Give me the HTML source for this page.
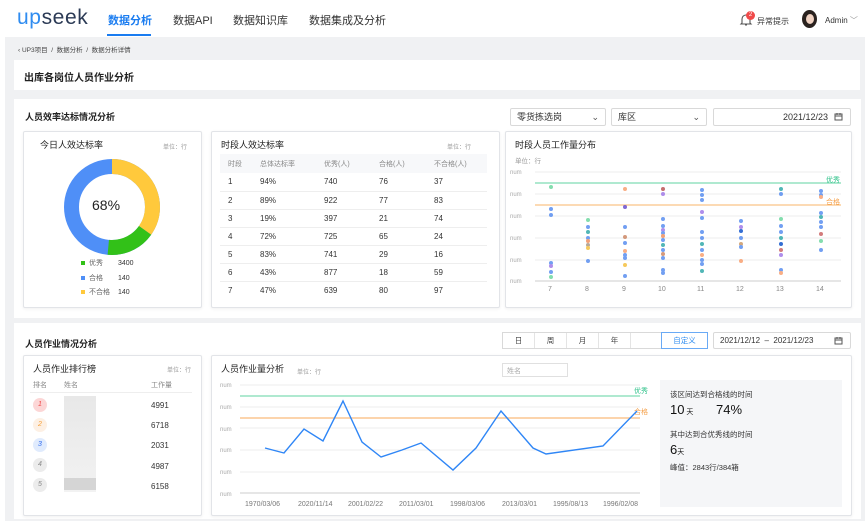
<!DOCTYPE html>
<html><head><meta charset="utf-8"><style>
*{margin:0;padding:0;box-sizing:border-box}
body{width:865px;height:524px;overflow:hidden;background:#fff;font-family:"Liberation Sans","Noto Sans CJK SC",sans-serif;color:#333;position:relative}
.a{position:absolute}
.card{position:absolute;background:#fff;border:1px solid #e2e4e8;border-radius:2px;box-shadow:0 1px 3px rgba(0,0,0,.06)}
.sel{position:absolute;border:1px solid #d9d9d9;border-radius:2px;background:#fff;font-size:9px;color:#333;padding:0 6px;height:18px;line-height:16px}
.s{font-size:6px;color:#999;position:absolute}
table{border-collapse:collapse;font-size:8px;color:#333}
</style></head><body>
<div class="a" style="left:17px;top:6px;font-size:21px;color:#2f8cf0;letter-spacing:0.6px;font-family:'Liberation Sans',sans-serif">up<span style="color:#2b3a55">seek</span></div>
<div class="a" style="left:108px;top:12px;font-size:11px;color:#1a7cf0;font-weight:bold">数据分析</div>
<div class="a" style="left:107px;top:34px;width:44px;height:2px;background:#1a7cf0"></div>
<div class="a" style="left:173px;top:12px;font-size:11px;color:#333">数据API</div>
<div class="a" style="left:233px;top:12px;font-size:11px;color:#333">数据知识库</div>
<div class="a" style="left:309px;top:12px;font-size:11px;color:#333">数据集成及分析</div>
<svg class="a" style="left:739px;top:13px" width="14" height="14" viewBox="0 0 14 14"><path d="M3 10V6a4 4 0 0 1 8 0v4l1 1H2z M6 12h2" fill="none" stroke="#555" stroke-width="1.1"/></svg>
<div class="a" style="left:746px;top:11px;width:9px;height:9px;border-radius:50%;background:#f04a4a;color:#fff;font-size:6px;text-align:center;line-height:9px">2</div>
<div class="a" style="left:757px;top:16px;font-size:8px;color:#333">异常提示</div>
<div class="a" style="left:802px;top:10px;width:15px;height:18px;border-radius:50%;background:#2a221f"><div style="margin:4px auto 0;width:8px;height:10px;border-radius:50%;background:#f1d3c3"></div></div>
<div class="a" style="left:825px;top:15px;font-size:8px;color:#333">Admin <span style="color:#999">﹀</span></div>
<div class="a" style="left:5px;top:37px;width:860px;height:484px;background:#f0f1f3"></div>
<div class="a" style="left:18px;top:44px;font-size:6.5px;color:#444">‹ UP3项目 &nbsp;/&nbsp; 数据分析 &nbsp;/&nbsp; 数据分析详情</div>
<div class="a" style="left:14px;top:60px;width:846px;height:30px;background:#fff"></div>
<div class="a" style="left:24px;top:69px;font-size:10px;font-weight:bold;color:#222">出库各岗位人员作业分析</div>
<div class="a" style="left:14px;top:99px;width:847px;height:219px;background:#fff"></div>
<div class="a" style="left:25px;top:110px;font-size:9px;font-weight:bold;color:#222">人员效率达标情况分析</div>
<div class="sel" style="left:510px;top:108px;width:96px">零货拣选岗<span style="float:right;color:#555">⌄</span></div>
<div class="sel" style="left:611px;top:108px;width:96px">库区<span style="float:right;color:#555">⌄</span></div>
<div class="sel" style="left:713px;top:108px;width:138px;text-align:right;padding-right:22px">2021/12/23</div>
<svg class="a" style="left:834px;top:112px" width="9" height="9"><rect x="1" y="2" width="7" height="6" fill="none" stroke="#555"/><path d="M1 4h7M3 1v2M6 1v2" stroke="#555"/></svg>
<div class="card" style="left:23px;top:131px;width:179px;height:177px"></div>
<div class="a" style="left:40px;top:138px;font-size:9px;color:#222">今日人效达标率</div>
<div class="s" style="left:163px;top:142px">单位：行</div>
<svg class="a" style="left:64px;top:159px" width="96" height="96" viewBox="0 0 96 96">
<g transform="rotate(-90 48 48)" fill="none" stroke-width="15">
<circle cx="48" cy="48" r="40.5" stroke="#4f8ff7"/>
<circle cx="48" cy="48" r="40.5" stroke="#ffc93c" stroke-dasharray="88.4 300"/>
<circle cx="48" cy="48" r="40.5" stroke="#32c118" stroke-dasharray="0 88.4 42.4 300"/>
</g></svg>
<div class="a" style="left:92px;top:197px;font-size:14px;color:#222">68%</div>
<div class="a" style="left:81px;top:257px;font-size:7px;color:#666;line-height:14.7px">
<div><span style="display:inline-block;width:4px;height:4px;background:#32c118;margin-right:4px"></span>优秀<span style="position:absolute;left:37px;color:#333">3400</span></div>
<div><span style="display:inline-block;width:4px;height:4px;background:#4f8ff7;margin-right:4px"></span>合格<span style="position:absolute;left:37px;color:#333">140</span></div>
<div><span style="display:inline-block;width:4px;height:4px;background:#ffc93c;margin-right:4px"></span>不合格<span style="position:absolute;left:37px;color:#333">140</span></div>
</div>
<div class="card" style="left:211px;top:131px;width:289px;height:177px"></div>
<div class="a" style="left:221px;top:138px;font-size:9px;color:#222">时段人效达标率</div>
<div class="s" style="left:447px;top:142px">单位：行</div>
<div class="a" style="left:220px;top:154px;width:267px;height:19px;background:#f7f8fa"></div>
<table class="a" style="left:220px;top:154px;width:267px">
<tr style="height:19px;color:#888;font-size:7px"><td style="padding-left:8px;width:40px">时段</td><td style="width:64px">总体达标率</td><td style="width:55px">优秀(人)</td><td style="width:55px">合格(人)</td><td>不合格(人)</td></tr>
<tr style="height:18px;border-bottom:1px solid #eee"><td style="padding-left:8px">1</td><td>94%</td><td>740</td><td>76</td><td>37</td></tr>
<tr style="height:18px;border-bottom:1px solid #eee"><td style="padding-left:8px">2</td><td>89%</td><td>922</td><td>77</td><td>83</td></tr>
<tr style="height:18px;border-bottom:1px solid #eee"><td style="padding-left:8px">3</td><td>19%</td><td>397</td><td>21</td><td>74</td></tr>
<tr style="height:18px;border-bottom:1px solid #eee"><td style="padding-left:8px">4</td><td>72%</td><td>725</td><td>65</td><td>24</td></tr>
<tr style="height:18px;border-bottom:1px solid #eee"><td style="padding-left:8px">5</td><td>83%</td><td>741</td><td>29</td><td>16</td></tr>
<tr style="height:18px;border-bottom:1px solid #eee"><td style="padding-left:8px">6</td><td>43%</td><td>877</td><td>18</td><td>59</td></tr>
<tr style="height:18px"><td style="padding-left:8px">7</td><td>47%</td><td>639</td><td>80</td><td>97</td></tr>
</table>
<div class="card" style="left:505px;top:131px;width:347px;height:177px"></div>
<div class="a" style="left:515px;top:138px;font-size:9px;color:#222">时段人员工作量分布</div>
<div class="a" style="left:515px;top:155px;font-size:6.5px;color:#999">单位：行</div>
<svg class="a" style="left:505px;top:165px" width="347" height="135" viewBox="505 165 347 135" font-family="Liberation Sans" font-size="6">
<g fill="#aaa"><text x="510" y="174">num</text><text x="510" y="196">num</text><text x="510" y="218">num</text><text x="510" y="240">num</text><text x="510" y="262">num</text><text x="510" y="283">num</text></g>
<g stroke="#eee"><path d="M535 172H841M535 194H841M535 216H841M535 238H841M535 260H841"/></g>
<path d="M535 281H841" stroke="#ccc"/>
<path d="M535 183H841" stroke="#7fdcb4" stroke-width="1.2"/>
<path d="M535 205H841" stroke="#f8b66a" stroke-width="1"/>
<text x="826" y="182" fill="#2fc28a" font-size="7">优秀</text><text x="826" y="204" fill="#f5a04a" font-size="7">合格</text>
<g fill="#888" font-size="7"><text x="548" y="291">7</text><text x="585" y="291">8</text><text x="622" y="291">9</text><text x="658" y="291">10</text><text x="697" y="291">11</text><text x="736" y="291">12</text><text x="776" y="291">13</text><text x="816" y="291">14</text></g>
<g fill="#5a8ff0" opacity=".85">
<circle cx="551" cy="187" r="2" fill="#6fd8a0"/><circle cx="551" cy="209" r="2"/><circle cx="551" cy="215" r="2"/><circle cx="551" cy="263" r="2"/><circle cx="551" cy="266" r="2" fill="#a27be8"/><circle cx="551" cy="272" r="2"/><circle cx="551" cy="277" r="2" fill="#6fd8a0"/>
<circle cx="588" cy="220" r="2" fill="#6fd8a0"/><circle cx="588" cy="227" r="2"/><circle cx="588" cy="232" r="2" fill="#3aa"/><circle cx="588" cy="238" r="2"/><circle cx="588" cy="241" r="2" fill="#f09060"/><circle cx="588" cy="245" r="2" fill="#a98"/><circle cx="588" cy="248" r="2" fill="#f5c040"/><circle cx="588" cy="261" r="2"/>
<circle cx="625" cy="189" r="2" fill="#f8a070"/><circle cx="625" cy="207" r="2" fill="#6a4fd0"/><circle cx="625" cy="227" r="2"/><circle cx="625" cy="237" r="2" fill="#c86"/><circle cx="625" cy="243" r="2"/><circle cx="625" cy="251" r="2" fill="#f8a070"/><circle cx="625" cy="255" r="2"/><circle cx="625" cy="258" r="2"/><circle cx="625" cy="265" r="2" fill="#f5c040"/><circle cx="625" cy="276" r="2"/>
<circle cx="663" cy="189" r="2" fill="#b55"/><circle cx="663" cy="194" r="2" fill="#a27be8"/><circle cx="663" cy="219" r="2"/><circle cx="663" cy="226" r="2"/><circle cx="663" cy="230" r="2" fill="#a27be8"/><circle cx="663" cy="233" r="2"/><circle cx="663" cy="236" r="2" fill="#f09060"/><circle cx="663" cy="240" r="2"/><circle cx="663" cy="245" r="2" fill="#3aa"/><circle cx="663" cy="250" r="2"/><circle cx="663" cy="254" r="2" fill="#c86"/><circle cx="663" cy="258" r="2"/><circle cx="663" cy="270" r="2"/><circle cx="663" cy="273" r="2"/>
<circle cx="702" cy="190" r="2"/><circle cx="702" cy="195" r="2"/><circle cx="702" cy="200" r="2"/><circle cx="702" cy="212" r="2" fill="#a27be8"/><circle cx="702" cy="218" r="2"/><circle cx="702" cy="232" r="2"/><circle cx="702" cy="238" r="2"/><circle cx="702" cy="244" r="2" fill="#3aa"/><circle cx="702" cy="250" r="2"/><circle cx="702" cy="255" r="2" fill="#f8a070"/><circle cx="702" cy="260" r="2"/><circle cx="702" cy="264" r="2"/><circle cx="702" cy="271" r="2" fill="#3aa"/>
<circle cx="741" cy="221" r="2"/><circle cx="741" cy="227" r="2" fill="#a27be8"/><circle cx="741" cy="231" r="2" fill="#15c"/><circle cx="741" cy="238" r="2"/><circle cx="741" cy="244" r="2" fill="#c96"/><circle cx="741" cy="247" r="2"/><circle cx="741" cy="261" r="2" fill="#f8a070"/>
<circle cx="781" cy="189" r="2" fill="#3aa"/><circle cx="781" cy="194" r="2"/><circle cx="781" cy="219" r="2" fill="#6fd8a0"/><circle cx="781" cy="226" r="2"/><circle cx="781" cy="232" r="2"/><circle cx="781" cy="238" r="2" fill="#3aa"/><circle cx="781" cy="244" r="2" fill="#15c"/><circle cx="781" cy="250" r="2" fill="#c66"/><circle cx="781" cy="255" r="2" fill="#a27be8"/><circle cx="781" cy="270" r="2"/><circle cx="781" cy="273" r="2" fill="#f8a070"/>
<circle cx="821" cy="191" r="2"/><circle cx="821" cy="195" r="2"/><circle cx="821" cy="197" r="2" fill="#f8a070"/><circle cx="821" cy="213" r="2"/><circle cx="821" cy="217" r="2" fill="#3aa"/><circle cx="821" cy="222" r="2"/><circle cx="821" cy="227" r="2"/><circle cx="821" cy="234" r="2" fill="#c66"/><circle cx="821" cy="241" r="2" fill="#6fd8a0"/><circle cx="821" cy="250" r="2"/>
</g></svg>
<div class="a" style="left:14px;top:323px;width:847px;height:196px;background:#fff"></div>
<div class="a" style="left:25px;top:337px;font-size:9px;font-weight:bold;color:#222">人员作业情况分析</div>
<div class="a" style="left:502px;top:332px;width:206px;height:17px;border:1px solid #d9d9d9;display:flex;font-size:7.5px;color:#444">
<div style="width:32px;text-align:center;line-height:15px;border-right:1px solid #e4e4e4">日</div><div style="width:32px;text-align:center;line-height:15px;border-right:1px solid #e4e4e4">周</div><div style="width:32px;text-align:center;line-height:15px;border-right:1px solid #e4e4e4">月</div><div style="width:32px;text-align:center;line-height:15px;border-right:1px solid #e4e4e4">年</div><div style="width:31px;border-right:1px solid #e4e4e4"></div><div style="flex:1;text-align:center;line-height:15px;color:#2f8cf0;outline:1px solid #6aaaf5">自定义</div></div>
<div class="sel" style="left:713px;top:332px;width:138px;font-size:8px;height:17px;line-height:15px">2021/12/12 &nbsp;–&nbsp; 2021/12/23</div>
<svg class="a" style="left:834px;top:336px" width="9" height="9"><rect x="1" y="2" width="7" height="6" fill="none" stroke="#555"/><path d="M1 4h7M3 1v2M6 1v2" stroke="#555"/></svg>
<div class="card" style="left:23px;top:355px;width:179px;height:161px"></div>
<div class="a" style="left:33px;top:362px;font-size:9px;color:#222">人员作业排行榜</div>
<div class="s" style="left:167px;top:365px">单位：行</div>
<div class="a" style="left:33px;top:380px;font-size:7px;color:#888">排名</div>
<div class="a" style="left:64px;top:380px;font-size:7px;color:#888">姓名</div>
<div class="a" style="left:151px;top:380px;font-size:7px;color:#888">工作量</div>
<div class="a" style="left:30px;top:392px;width:162px;height:1px;background:#eee"></div>
<div class="a" style="left:64px;top:396px;width:32px;height:96px;background:linear-gradient(#e8e8e8,#f2f2f2)"></div>
<div class="a" style="left:64px;top:478px;width:32px;height:12px;background:#d5d5d5"></div>
<div class="a" style="left:33px;top:398px;width:14px;height:14px;border-radius:50%;background:#fcd6d6;color:#f04a4a;font-size:7px;text-align:center;line-height:14px;font-style:italic">1</div>
<div class="a" style="left:33px;top:418px;width:14px;height:14px;border-radius:50%;background:#fdf0e4;color:#f5a03a;font-size:7px;text-align:center;line-height:14px;font-style:italic">2</div>
<div class="a" style="left:33px;top:438px;width:14px;height:14px;border-radius:50%;background:#e0ebfd;color:#2f6cf0;font-size:7px;text-align:center;line-height:14px;font-style:italic">3</div>
<div class="a" style="left:33px;top:458px;width:14px;height:14px;border-radius:50%;background:#ececec;color:#888;font-size:7px;text-align:center;line-height:14px;font-style:italic">4</div>
<div class="a" style="left:33px;top:478px;width:14px;height:14px;border-radius:50%;background:#ececec;color:#888;font-size:7px;text-align:center;line-height:14px;font-style:italic">5</div>
<div class="a" style="left:151px;top:396px;font-size:8px;line-height:20.2px;color:#333">4991<br>6718<br>2031<br>4987<br>6158</div>
<div class="card" style="left:211px;top:355px;width:641px;height:161px"></div>
<div class="a" style="left:221px;top:362px;font-size:9px;color:#222">人员作业量分析</div>
<div class="s" style="left:297px;top:367px">单位：行</div>
<div class="a" style="left:502px;top:363px;width:66px;height:14px;border:1px solid #e0e0e0;font-size:7px;color:#aaa;padding:2px 4px">姓名</div>
<svg class="a" style="left:211px;top:378px" width="440" height="135" viewBox="211 378 440 135" font-family="Liberation Sans" font-size="6">
<g fill="#aaa"><text x="220" y="387">num</text><text x="220" y="409">num</text><text x="220" y="431">num</text><text x="220" y="452">num</text><text x="220" y="474">num</text><text x="220" y="496">num</text></g>
<g stroke="#eee"><path d="M240 385H640M240 407H640M240 428H640M240 450H640M240 472H640"/></g>
<path d="M240 493H640" stroke="#ccc"/>
<path d="M240 396H640" stroke="#7fdcb4" stroke-width="1.2"/>
<path d="M240 418H640" stroke="#fbc690" stroke-width="1.5"/>
<text x="634" y="393" fill="#2fc28a" font-size="7">优秀</text><text x="634" y="414" fill="#f5a04a" font-size="7">合格</text>
<polyline fill="none" stroke="#2f86f6" stroke-width="1.4" points="265,448 284,453 304,429 323,441 343,401 362,442 381,457 402,450 421,443 453,470 476,448 501,411 533,448 546,454 603,446 637,411"/>
<g fill="#777" font-size="7"><text x="245" y="506">1970/03/06</text><text x="298" y="506">2020/11/14</text><text x="348" y="506">2001/02/22</text><text x="399" y="506">2011/03/01</text><text x="450" y="506">1998/03/06</text><text x="502" y="506">2013/03/01</text><text x="553" y="506">1995/08/13</text><text x="603" y="506">1996/02/08</text></g>
</svg>
<div class="a" style="left:660px;top:380px;width:182px;height:127px;background:#f5f6f8"></div>
<div class="a" style="left:670px;top:389px;font-size:7.5px;color:#333">该区间达到合格线的时间</div>
<div class="a" style="left:670px;top:402px;font-size:13px;color:#111">10<span style="font-size:7px"> 天</span></div>
<div class="a" style="left:716px;top:402px;font-size:13px;color:#111">74%</div>
<div class="a" style="left:670px;top:429px;font-size:7.5px;color:#333">其中达到合优秀线的时间</div>
<div class="a" style="left:670px;top:442px;font-size:13px;color:#111">6<span style="font-size:7px">天</span></div>
<div class="a" style="left:670px;top:462px;font-size:7.5px;color:#333">峰值：2843行/384箱</div>
</body></html>
